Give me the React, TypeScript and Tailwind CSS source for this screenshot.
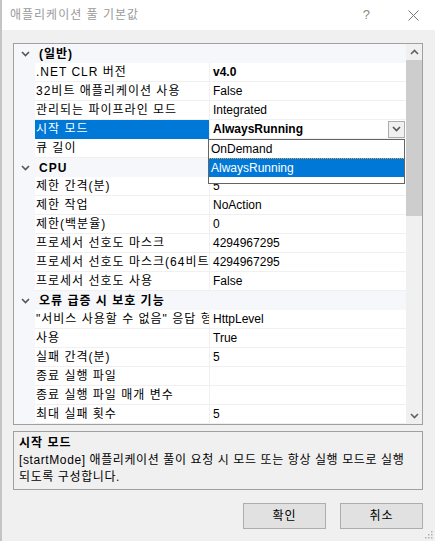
import React from 'react'

type Row =
  | { kind: 'cat'; label: string }
  | { kind: 'prop'; label: string; value?: string; bold?: boolean; selected?: boolean }

const rows: Row[] = [
  { kind: 'cat', label: '(일반)' },
  { kind: 'prop', label: '.NET CLR 버전', value: 'v4.0', bold: true },
  { kind: 'prop', label: '32비트 애플리케이션 사용', value: 'False' },
  { kind: 'prop', label: '관리되는 파이프라인 모드', value: 'Integrated' },
  { kind: 'prop', label: '시작 모드', value: 'AlwaysRunning', bold: true, selected: true },
  { kind: 'prop', label: '큐 길이', value: '1000' },
  { kind: 'cat', label: 'CPU' },
  { kind: 'prop', label: '제한 간격(분)', value: '5' },
  { kind: 'prop', label: '제한 작업', value: 'NoAction' },
  { kind: 'prop', label: '제한(백분율)', value: '0' },
  { kind: 'prop', label: '프로세서 선호도 마스크', value: '4294967295' },
  { kind: 'prop', label: '프로세서 선호도 마스크(64비트 옵션)', value: '4294967295' },
  { kind: 'prop', label: '프로세서 선호도 사용', value: 'False' },
  { kind: 'cat', label: '오류 급증 시 보호 기능' },
  { kind: 'prop', label: '"서비스 사용할 수 없음" 응답 형식', value: 'HttpLevel' },
  { kind: 'prop', label: '사용', value: 'True' },
  { kind: 'prop', label: '실패 간격(분)', value: '5' },
  { kind: 'prop', label: '종료 실행 파일', value: '' },
  { kind: 'prop', label: '종료 실행 파일 매개 변수', value: '' },
  { kind: 'prop', label: '최대 실패 횟수', value: '5' },
]

const font = { fontFamily: '"Liberation Sans", "Noto Sans CJK KR", sans-serif' }

function Chevron({ up = false, className = '' }: { up?: boolean; className?: string }) {
  return (
    <svg width="9" height="6" viewBox="0 0 9 6" className={className}>
      <polyline
        points={up ? '1,5 4.5,1.5 8,5' : '1,1 4.5,4.5 8,1'}
        fill="none"
        stroke="currentColor"
        strokeWidth="1.6"
      />
    </svg>
  )
}

function GridRow({ row }: { row: Row }) {
  if (row.kind === 'cat') {
    return (
      <div className="flex h-[19px] items-center bg-[#f5f7fa]">
        <div className="flex w-[21px] shrink-0 justify-center pl-[2px] text-[#555]">
          <Chevron />
        </div>
        <span className="pl-[4px] text-[12px] leading-none font-bold tracking-[1px] text-black">
          {row.label}
        </span>
      </div>
    )
  }
  return (
    <div className="flex h-[19px]">
      <div className="w-[21px] shrink-0 bg-[#f5f7fa]" />
      <div
        className={
          'flex w-[174px] shrink-0 items-center overflow-hidden border-b pl-[1px] whitespace-nowrap ' +
          (row.selected
            ? 'border-[#0078d7] bg-[#0078d7] text-white'
            : 'border-[#f0f0f0] bg-white text-black')
        }
      >
        <span className="text-[12px] leading-none tracking-[1px]">{row.label}</span>
      </div>
      <div className="w-px shrink-0 bg-[#f0f0f0]" />
      <div className="flex min-w-0 flex-1 items-center overflow-hidden border-b border-[#f0f0f0] bg-white pl-[3px] whitespace-nowrap">
        <span className={'text-[12px] leading-none text-black ' + (row.bold ? 'font-bold' : '')}>
          {row.value}
        </span>
        {row.selected ? (
          <div className="mr-[1px] ml-auto flex h-[17px] w-[17px] items-center justify-center border border-[#acacac] bg-[#f0f0f0] text-[#555]">
            <Chevron />
          </div>
        ) : null}
      </div>
    </div>
  )
}

export default function App() {
  return (
    <div className="flex h-[541px] w-[435px] overflow-hidden bg-[#f0f0f0]" style={font}>
      <div className="w-[2px] shrink-0 bg-[#c4c4c4]" />
      <div className="flex min-w-0 flex-1 flex-col">
        {/* Title bar */}
        <div className="flex h-[30px] shrink-0 items-center bg-white">
          <span className="pl-[8px] text-[12px] tracking-[1px] text-[#9a9a9a]">애플리케이션 풀 기본값</span>
          <span className="ml-auto pr-[38px] text-[13px] text-[#888]">?</span>
          <svg width="11" height="11" viewBox="0 0 11 11" className="mr-[16px]">
            <path d="M0.5 0.5 L10.5 10.5 M10.5 0.5 L0.5 10.5" stroke="#777" strokeWidth="1" />
          </svg>
        </div>

        {/* Property grid */}
        <div className="relative mt-[13px] ml-[11px] flex h-[382px] w-[410px] border border-[#a0a0a0] bg-white">
          <div className="flex min-w-0 flex-1 flex-col">
            {rows.map((r, i) => (
              <GridRow key={i} row={r} />
            ))}
          </div>
          {/* Scrollbar */}
          <div className="flex w-[16px] shrink-0 flex-col bg-[#f0f0f0]">
            <div className="flex h-[16px] items-center justify-center text-[#606060]">
              <Chevron up />
            </div>
            <div className="h-[156px] bg-[#cdcdcd]" />
            <div className="flex-1" />
            <div className="flex h-[16px] items-center justify-center text-[#606060]">
              <Chevron />
            </div>
          </div>

          {/* Open dropdown */}
          <div className="absolute top-[95px] left-[194px] flex h-[45px] w-[197px] flex-col border border-[#646464] bg-white">
            <div className="flex h-[18px] items-center pl-[2px] text-[12px] leading-none text-black">
              OnDemand
            </div>
            <div className="flex h-[19px] items-center border-t border-dotted border-[#e6a23c] bg-[#0078d7] pl-[2px] text-[12px] leading-none text-white">
              AlwaysRunning
            </div>
          </div>
        </div>

        {/* Description */}
        <div className="mt-[6px] ml-[11px] flex h-[59px] w-[410px] flex-col border border-[#a0a0a0] px-[5px] pt-[3px]">
          <span className="text-[12px] leading-[17px] font-bold tracking-[1px] text-black">시작 모드</span>
          <span className="text-[12px] leading-[17px] tracking-[0.6px] whitespace-nowrap text-black">
            [startMode] 애플리케이션 풀이 요청 시 모드 또는 항상 실행 모드로 실행
            <br />
            되도록 구성합니다.
          </span>
        </div>

        {/* Buttons */}
        <div className="mt-[13px] flex justify-end gap-[14px] pr-[12px]">
          <button className="h-[26px] w-[83px] border border-[#adadad] bg-[#e1e1e1] text-[12px] tracking-[1px] text-black">
            확인
          </button>
          <button className="h-[26px] w-[83px] border border-[#adadad] bg-[#e1e1e1] text-[12px] tracking-[1px] text-black">
            취소
          </button>
        </div>

        <div className="mt-auto flex justify-end pr-[2px] pb-[2px]">
          <svg width="10" height="10" viewBox="0 0 10 10">
            {[
              [8, 2],
              [8, 5],
              [5, 5],
              [8, 8],
              [5, 8],
              [2, 8],
            ].map(([x, y], i) => (
              <rect key={i} x={x} y={y} width="1.5" height="1.5" fill="#b0b0b0" />
            ))}
          </svg>
        </div>
      </div>
    </div>
  )
}
